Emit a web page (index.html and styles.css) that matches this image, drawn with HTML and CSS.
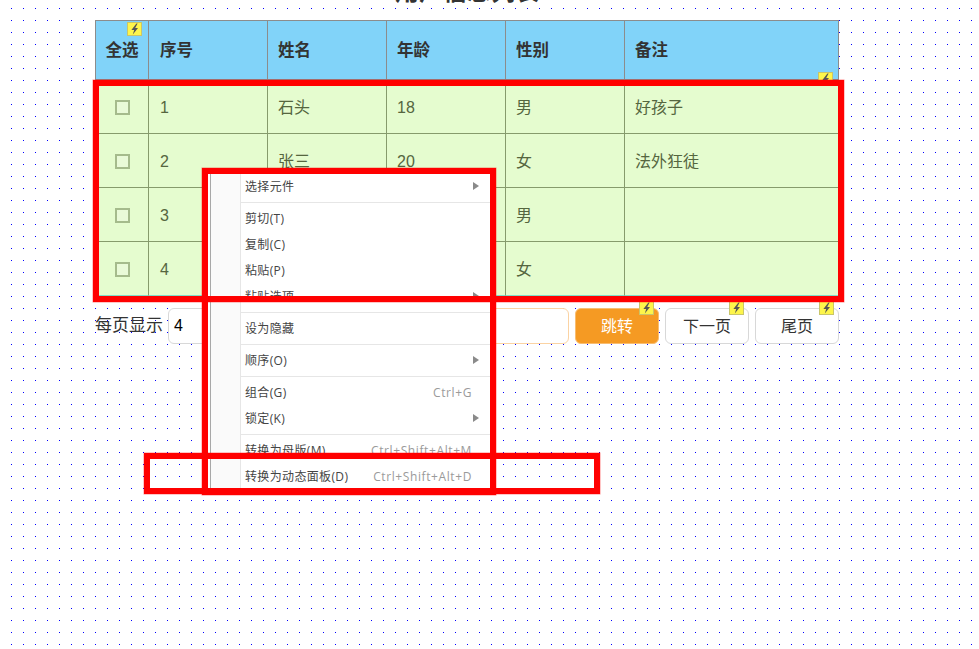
FILE: index.html
```html
<!DOCTYPE html>
<html lang="zh">
<head>
<meta charset="utf-8">
<title>列表</title>
<link rel="stylesheet" href="styles.css">
</head>
<body>
<svg class="defs" width="0" height="0"><symbol id="bolt" viewBox="1 1 13 12"><path d="M9.4 1.6 4.4 8h2.8L5.8 12.6 11 6H8.2L10.6 1.6z"/></symbol></svg>
<main class="page">
  <h1 class="title">用户信息列表</h1>
  <div class="table-wrap">
    <table class="grid">
      <colgroup><col class="c-check"><col class="c-std"><col class="c-std"><col class="c-std"><col class="c-std"><col class="c-note"></colgroup>
      <thead>
        <tr><th class="center">全选</th><th class="first">序号</th><th>姓名</th><th>年龄</th><th>性别</th><th>备注</th></tr>
      </thead>
      <tbody>
        <tr><td class="center"><span class="box"></span></td><td class="first">1</td><td>石头</td><td>18</td><td>男</td><td>好孩子</td></tr>
        <tr><td class="center"><span class="box"></span></td><td class="first">2</td><td>张三</td><td>20</td><td>女</td><td>法外狂徒</td></tr>
        <tr><td class="center"><span class="box"></span></td><td class="first">3</td><td></td><td></td><td>男</td><td></td></tr>
        <tr><td class="center"><span class="box"></span></td><td class="first">4</td><td></td><td></td><td>女</td><td></td></tr>
      </tbody>
    </table>
    <svg class="badge badge-all"><use href="#bolt"/></svg>
    <svg class="badge badge-note"><use href="#bolt"/></svg>
  </div>
  <div class="pager">
    <span class="pager-label">每页显示</span>
    <div class="field">4</div>
    <div class="field-orange"></div>
    <button class="btn btn-go">跳转<svg class="badge badge-btn"><use href="#bolt"/></svg></button>
    <button class="btn">下一页<svg class="badge badge-btn"><use href="#bolt"/></svg></button>
    <button class="btn">尾页<svg class="badge badge-btn"><use href="#bolt"/></svg></button>
  </div>
</main>

<div class="menu">
  <div class="item"><span>选择元件</span><i class="arrow"></i></div>
  <hr class="sep">
  <div class="item"><span>剪切(T)</span></div>
  <div class="item"><span>复制(C)</span></div>
  <div class="item"><span>粘贴(P)</span></div>
  <div class="item"><span>粘贴选项</span><i class="arrow"></i></div>
  <hr class="sep">
  <div class="item"><span>设为隐藏</span></div>
  <hr class="sep">
  <div class="item"><span>顺序(O)</span><i class="arrow"></i></div>
  <hr class="sep">
  <div class="item"><span>组合(G)</span><em class="key">Ctrl+G</em></div>
  <div class="item"><span>锁定(K)</span><i class="arrow"></i></div>
  <hr class="sep">
  <div class="item"><span>转换为母版(M)</span><em class="key">Ctrl+Shift+Alt+M</em></div>
  <div class="item"><span>转换为动态面板(D)</span><em class="key">Ctrl+Shift+Alt+D</em></div>
</div>

<div class="mark mark-rows"></div>
<div class="mark mark-menu"></div>
<div class="mark mark-item"></div>
</body>
</html>
```

FILE: styles.css
```css
* { box-sizing: border-box; }
html, body { margin: 0; height: 100%; }
body {
  position: relative;
  overflow: hidden;
  background: #fff conic-gradient(at 1px 1px, transparent 75%, #00f 0) 11px 8px / 12px 12px;
  font-family: "Liberation Sans", "Noto Sans CJK SC", sans-serif;
  color: #333;
}
.defs { position: absolute; }

.page { width: 744px; margin-left: 95px; }
.title {
  margin: -23px 0 13px;
  height: 30px;
  line-height: 30px;
  font-size: 24px;
  font-weight: 700;
  text-align: center;
  color: #333;
}

.table-wrap { position: relative; }
.grid {
  width: 744px;
  table-layout: fixed;
  border-collapse: separate;
  border-spacing: 0;
  border-top: 1px solid #8c8c8c;
  border-left: 1px solid #8c8c8c;
}
.c-check { width: 53px; }
.c-std { width: 119px; }
.c-note { width: 214px; }
th, td { padding: 0 0 0 10px; text-align: left; line-height: 20px; }
th {
  height: 59px;
  font-size: 16.5px;
  background: #81d3f9;
  border-right: 1px solid #8c8c8c;
  border-bottom: 1px solid #8c8c8c;
  font-weight: 700;
  color: #333;
}
td {
  height: 54px;
  padding-top: 2px;
  font-size: 16px;
  background: #e5fccf;
  border-right: 1px solid #869b6c;
  border-bottom: 1px solid #869b6c;
  color: #55663f;
}
th.first, td.first { padding-left: 11px; }
tbody tr:last-child td { border-bottom-color: #7fdcc8; }
th.center { padding: 0; text-align: center; }
td.center { padding: 2px 0 0; text-align: center; }
.box {
  display: block;
  width: 15px;
  height: 15px;
  margin: 0 auto;
  border: 2px solid #a5bb8c;
  background: #e9fad8;
}

.badge {
  position: absolute;
  width: 15px;
  height: 14px;
  background: #fdf54b;
  border: 1px solid #c9c56a;
  fill: #555;
}
.badge-all { left: 32px; top: 2px; }
.badge-note { left: 723px; top: 52px; }

.pager { display: flex; align-items: center; gap: 6px; margin-top: 12px; height: 36px; }
.pager-label { width: 67px; margin-top: -1px; font-size: 17px; line-height: 20px; color: #333; white-space: nowrap; }
.field {
  width: 130px;
  height: 36px;
  margin-right: -6px;
  padding-left: 5px;
  line-height: 34px;
  font-size: 16px;
  color: #000;
  background: #fff;
  border: 1px solid #d8d8d8;
  border-radius: 6px;
}
.field-orange {
  width: 271px;
  height: 36px;
  background: #fff;
  border: 1px solid #fbd3a3;
  border-radius: 6px;
}
.btn {
  position: relative;
  width: 84px;
  height: 36px;
  padding: 0 0 2px;
  font: inherit;
  font-size: 16px;
  color: #333;
  background: #fff;
  border: 1px solid #d8d8d8;
  border-radius: 6px;
}
.btn-go { color: #fff; background: #f59a23; border-color: #f9bd70; }
.badge-btn { right: 4px; top: -8px; }

.menu {
  position: absolute;
  left: 208px;
  top: 168px;
  width: 282px;
  height: 322px;
  padding: 5px 0 0 32px;
  font-family: "Open Sans", "Noto Sans CJK SC", sans-serif;
  font-size: 12px;
  letter-spacing: .35px;
  color: #444;
  background:
    linear-gradient(#e6e6e6, #e6e6e6) 32px 0 / 1px 100% no-repeat,
    linear-gradient(#fafafa, #fafafa) 3px 0 / 29px 100% no-repeat,
    linear-gradient(#a8a8a8, #a8a8a8) 2px 0 / 1px 100% no-repeat,
    #fff;
}
.item {
  display: flex;
  align-items: center;
  height: 26px;
  padding: 0 11px 0 5px;
  white-space: nowrap;
}
.item > span { flex: 1; }
.arrow {
  width: 0;
  height: 0;
  border-left: 6px solid #8a8a8a;
  border-top: 4px solid transparent;
  border-bottom: 4px solid transparent;
}
.key { margin-right: 7px; font-style: normal; letter-spacing: .6px; color: #9a9a9a; }
.sep { height: 1px; margin: 3px 0 2px 1px; border: 0; background: #e6e6e6; }

.mark {
  position: absolute;
  border: 6px solid #f00;
  box-shadow: 0 0 0 .5px rgba(255, 0, 0, .45);
}
.mark-rows { left: 93px; top: 80px; width: 751px; height: 222px; }
.mark-menu { left: 202px; top: 168px; width: 294px; height: 327px; }
.mark-item { left: 144px; top: 453px; width: 456px; height: 41px; }
```
